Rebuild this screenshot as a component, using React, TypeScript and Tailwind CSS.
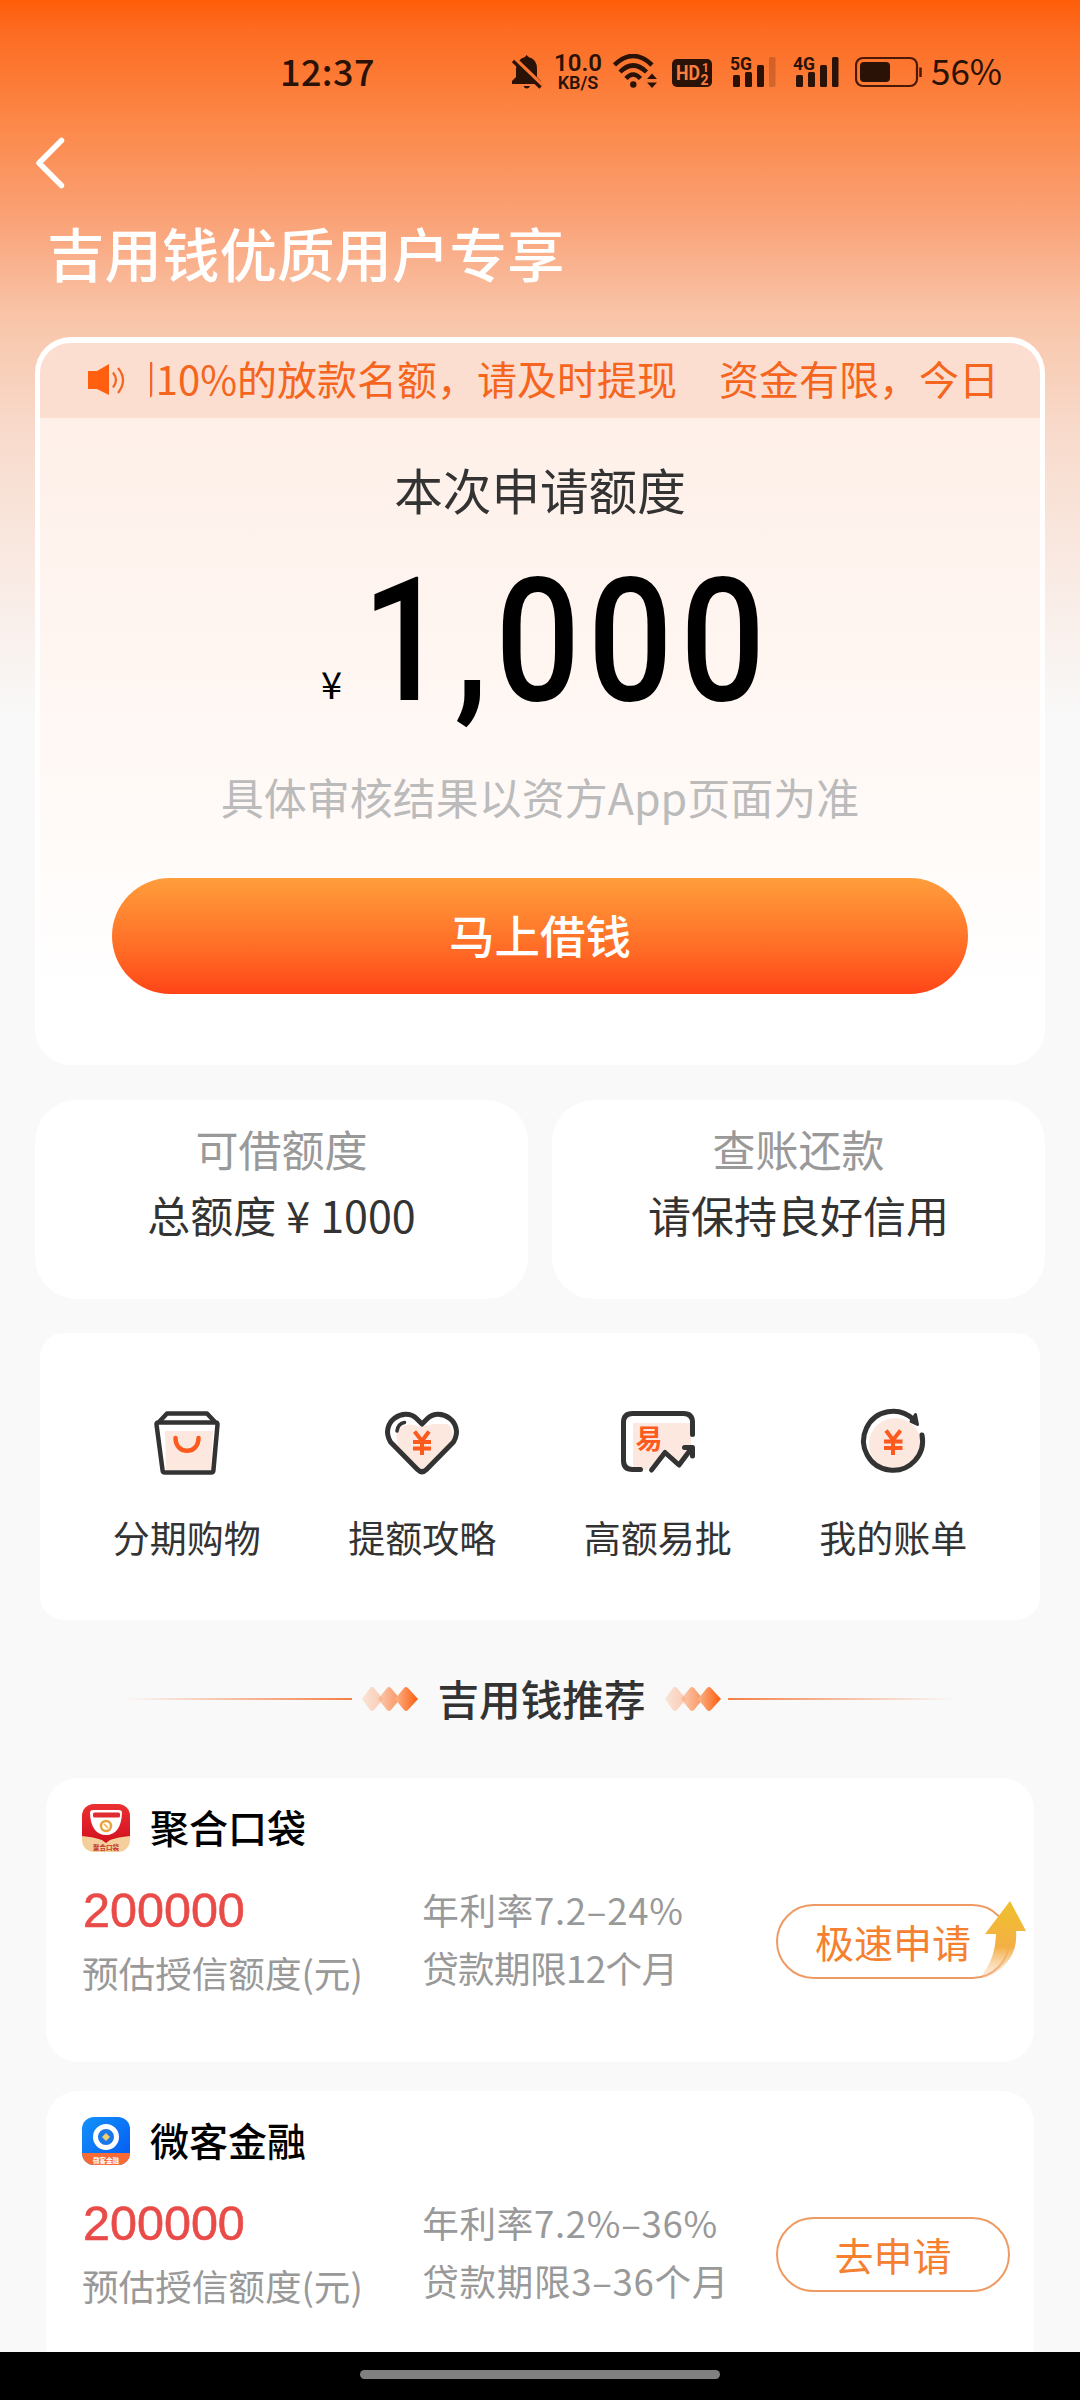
import type { ReactNode } from "react";

const features = [
  { label: "分期购物", icon: <BagIcon /> },
  { label: "提额攻略", icon: <HeartIcon /> },
  { label: "高额易批", icon: <ApproveIcon /> },
  { label: "我的账单", icon: <BillIcon /> },
];

const products = [
  { name: "聚合口袋", amount: "200000", rate: "年利率7.2–24%", term: "贷款期限12个月", termClass: "tracking-[-0.6px]", action: "极速申请", hot: true, logo: <PocketLogo /> },
  { name: "微客金融", amount: "200000", rate: "年利率7.2%–36%", term: "贷款期限3–36个月", termClass: "tracking-[0.7px]", action: "去申请", hot: false, logo: <WeikeLogo /> },
];

function BagIcon() {
  return (
    <svg width="80" height="80" viewBox="0 0 80 80" fill="none">
      <path d="M18 27H66L64 66H19Z" fill="#fde8df" />
      <path d="M9.500 20.500Q9.300 18.500 11.300 18.500H68.700Q70.700 18.500 70.500 20.500L66.400 66.500Q66.200 68.500 64.200 68.500H17.800Q15.800 68.500 15.600 66.500Z" stroke="#333" strokeWidth="4.500" strokeLinejoin="round" />
      <path d="M12 18L20 9.500H60L68 18" stroke="#333" strokeWidth="4.500" strokeLinejoin="round" />
      <path d="M28.500 34C28.500 51 51.500 51 51.500 34" stroke="#fc5a1e" strokeWidth="4.500" strokeLinecap="round" />
    </svg>
  );
}

function HeartIcon() {
  return (
    <svg width="80" height="80" viewBox="0 0 80 80" fill="none">
      <path d="M14 32C18 20 28 18 38 23L52 20H66Q75 30 67 40L40 67L16 42Z" fill="#fde8df" />
      <path d="M40 20L34.500 14.500C22 2.500 -3 18 8.500 38L35.500 65.500Q40 70 44.500 65.500L71.500 38C83 18 58 2.500 45.500 14.500Z" stroke="#333" strokeWidth="5" strokeLinejoin="round" />
      <path d="M15 27Q16 19.500 22.500 18.500" stroke="#333" strokeWidth="3.500" strokeLinecap="round" />
      <path d="M32.500 27.500L40 37L47 27.500M40 37V51M31 38H49M31 44.500H49" stroke="#fc5a1e" strokeWidth="4" />
    </svg>
  );
}

function ApproveIcon() {
  return (
    <svg width="80" height="80" viewBox="0 0 80 80" fill="none">
      <path d="M15 19H73V44L58 62L45 48L29 66H15Z" fill="#fde8df" />
      <path d="M22.500 65.500H14.500Q5.500 65.500 5.500 56.500V18.500Q5.500 9.500 14.500 9.500H65.500Q74.500 9.500 74.500 18.500V30.500" stroke="#333" strokeWidth="5" strokeLinecap="round" />
      <path d="M33.500 66L47 48.500L61 61L73 45" stroke="#333" strokeWidth="5" strokeLinecap="round" strokeLinejoin="round" />
      <path d="M66.500 43.500H74.500V52" stroke="#333" strokeWidth="5" strokeLinecap="round" strokeLinejoin="round" />
      <text x="17.500" y="45" fontSize="27" fontWeight="700" fill="#fc5a1e">易</text>
    </svg>
  );
}

function BillIcon() {
  return (
    <svg width="80" height="80" viewBox="0 0 80 80" fill="none">
      <circle cx="42" cy="40" r="26" fill="#fde8df" />
      <path d="M60.500 15.500A29.500 29.500 0 1 0 69 31" stroke="#333" strokeWidth="5" strokeLinecap="round" />
      <path d="M62.500 10.500L64.500 20.500L58 17.500Z" fill="#333" stroke="#333" strokeWidth="3" strokeLinecap="round" strokeLinejoin="round" />
      <path d="M33 26.500L40 36L47.500 26.500M40 36V51M31 37.500H49.500M31 44H49.500" stroke="#fc5a1e" strokeWidth="4" />
    </svg>
  );
}

function PocketLogo() {
  return (
    <svg width="48" height="48" viewBox="0 0 48 48">
      <defs>
        <clipPath id="pocket"><rect width="48" height="48" rx="12" /></clipPath>
        <linearGradient id="pocketRed" x1="0" y1="0" x2="0" y2="1">
          <stop stopColor="#eb3033" />
          <stop offset="1" stopColor="#d21020" />
        </linearGradient>
      </defs>
      <g clipPath="url(#pocket)">
        <rect width="48" height="48" fill="#f4cf9c" />
        <path d="M0 0H48V32Q36 33 28 36L24 39L20 36Q12 33 0 32Z" fill="url(#pocketRed)" />
        <path d="M11 6H37Q40 6 40 9C39.500 23 34 31 24 31S8.500 23 8 9Q8 6 11 6Z" fill="#fff" />
        <rect x="11" y="8.500" width="27" height="5" rx="1.500" fill="#e02b30" />
        <circle cx="24" cy="22" r="5" fill="none" stroke="#e8a33d" strokeWidth="2.500" />
        <path d="M22 20L26 24" stroke="#f2c063" strokeWidth="2" />
        <text x="24" y="45.500" textAnchor="middle" fontSize="6.500" fontWeight="700" fill="#c5352b">聚合口袋</text>
      </g>
    </svg>
  );
}

function WeikeLogo() {
  return (
    <svg width="48" height="48" viewBox="0 0 48 48">
      <defs>
        <clipPath id="weike"><rect width="48" height="48" rx="12" /></clipPath>
        <linearGradient id="weikeBlue" x1="0" y1="0" x2="1" y2="1">
          <stop stopColor="#1292fb" />
          <stop offset="1" stopColor="#0558f0" />
        </linearGradient>
      </defs>
      <g clipPath="url(#weike)">
        <rect width="48" height="48" fill="url(#weikeBlue)" />
        <rect y="36" width="48" height="12" fill="#fa6a35" />
        <circle cx="24" cy="20" r="10.500" fill="#1b78e8" stroke="#fff" strokeWidth="5" />
        <path d="M24 16L28 20L24 24L20 20Z" fill="#f0cf6a" />
        <text x="24" y="45.500" textAnchor="middle" fontSize="6.500" fontWeight="700" fill="#fff">微客金融</text>
      </g>
    </svg>
  );
}

function Signal({ label, weak }: { label: string; weak?: boolean }) {
  return (
    <svg className="overflow-visible" width="48" height="36" viewBox="0 0 48 36" fill="#2a1206">
      <text x="0" y="16" fontSize="19" fontWeight="700" textLength="22" lengthAdjust="spacingAndGlyphs" fontFamily="Roboto">{label}</text>
      <rect x="3" y="21" width="7" height="12" rx="1.500" />
      <rect x="15" y="18" width="7" height="15" rx="1.500" />
      <rect x="27" y="11" width="7" height="22" rx="1.500" />
      <rect x="39" y="3" width="6.500" height="30" rx="1.500" opacity={weak ? 0.2 : 1} />
    </svg>
  );
}

function StatusBar() {
  return (
    <div className="flex h-[110px] items-start pt-[54px] text-[#2a1206]">
      <span className="-mt-[3px] ml-[280px] w-[231px] text-[36px] leading-[38px] font-medium tracking-[0.4px]">12:37</span>
      <svg className="w-[43px] shrink-0" height="36" viewBox="0 0 43 36">
        <path d="M1 30V27L5 23V15Q6 5 14 3L15.500 1L17.500 3Q26 5 26 15V23L30 27V30Z" fill="#2a1206" />
        <path d="M12.500 32H19Q18 34.500 15.800 34.500Q13.500 34.500 12.500 32Z" fill="#2a1206" />
        <path d="M4 5L32 32" stroke="#fc7632" strokeWidth="4" />
        <path d="M2 7L29.500 33.500" stroke="#2a1206" strokeWidth="3.200" />
      </svg>
      <div className="w-[48px] shrink-0 text-center font-[Roboto] font-semibold">
        <p className="-mt-[1px] text-[24px] leading-[21px]">10.0</p>
        <p className="text-[18px] leading-[18px]">KB/S</p>
      </div>
      <svg className="ml-[11px] shrink-0" width="46" height="36" viewBox="0 0 46 36" fill="none">
        <path d="M1.500 11Q20 -7 39 11" stroke="#2a1206" strokeWidth="4.500" />
        <path d="M7 18Q20 5 33.500 18" stroke="#2a1206" strokeWidth="4.500" />
        <path d="M13 24.500Q20 16.500 27.500 24.500" stroke="#2a1206" strokeWidth="4.500" />
        <circle cx="20.300" cy="30.500" r="3.200" fill="#2a1206" />
        <path d="M34 25L39 19.500L44 25ZM34 28.500L39 34L44 28.500Z" fill="#2a1206" />
      </svg>
      <svg className="ml-[13px] shrink-0" width="41" height="36" viewBox="0 0 41 36">
        <rect y="5" width="40" height="28" rx="5" fill="#2a1206" />
        <g fill="#fb8040" fontFamily="Roboto" fontWeight="700">
          <text x="4" y="26" fontSize="21" textLength="24" lengthAdjust="spacingAndGlyphs">HD</text>
          <text x="30" y="17.500" fontSize="12">1</text>
          <text x="28.500" y="30.500" fontSize="14">2</text>
        </g>
      </svg>
      <div className="ml-[17px] flex shrink-0 gap-[15px]">
        <Signal label="5G" weak />
        <Signal label="4G" />
      </div>
      <svg className="ml-[14px] shrink-0" width="68" height="36" viewBox="0 0 68 36" fill="none">
        <rect x="1" y="4" width="61" height="28" rx="7" stroke="#4a1a06" strokeWidth="2.200" />
        <rect x="5" y="8" width="30" height="20" rx="4" fill="#2a1206" />
        <path d="M65.500 13.500V23" stroke="#4a1a06" strokeWidth="2.500" />
      </svg>
      <span className="-mt-[3px] ml-[8px] text-[35px] leading-[38px]">56%</span>
    </div>
  );
}

function NoticeBar() {
  return (
    <div className="flex h-[75px] items-center bg-[#fcded1] pb-[3px] pl-[48px] text-[#f5651d]">
      <svg className="shrink-0" width="38" height="34" viewBox="0 0 38 34" fill="none">
        <path d="M0 9H9L21 2V33L9 27H0Z" fill="#ff5f0f" />
        <path d="M25 10.500Q31 18 25 25.500M30 6Q40 18 30 31" stroke="#f5651d" strokeWidth="2.200" />
      </svg>
      <div className="ml-[24px] flex w-[849px] justify-end overflow-hidden pb-[2px] text-[40px] leading-[58px] whitespace-pre">
        <span>到10%的放款名额，请及时提现</span>
        <span className="ml-[42px]">资金有限，今日</span>
      </div>
    </div>
  );
}

function QuotaCard() {
  return (
    <section className="mx-[35px] flex h-[728px] flex-col overflow-hidden rounded-[36px] border-x-[5px] border-t-[6px] border-white bg-linear-to-b from-[#feeee6] via-[#fff7f3] to-white to-90%">
      <NoticeBar />
      <div className="flex flex-col items-center">
        <h2 className="mt-[36px] text-[48.6px] leading-[70px] text-[#333]">本次申请额度</h2>
        <div className="mt-[34px] flex h-[172px] w-full justify-start text-black">
          <span className="mt-[97px] ml-[281px] w-[41px] text-[38px] leading-[56px]">¥</span>
          <span className="origin-left scale-x-[0.87] font-[Roboto] text-[172px] leading-[166px] font-medium tracking-[8.500px]">1,000</span>
        </div>
        <p className="mt-[35px] text-[43px] leading-[62px] text-[#bbb]">具体审核结果以资方App页面为准</p>
        <button className="mt-[51px] h-[116px] w-[856px] rounded-full bg-linear-to-b from-[#ff9d3b] to-[#ff4317] pb-[3px] text-[45.5px] leading-[66px] font-medium text-white">
          马上借钱
        </button>
      </div>
    </section>
  );
}

function InfoCard({ title, children }: { title: string; children: ReactNode }) {
  return (
    <div className="h-[199px] flex-1 rounded-[42px] bg-white pt-[15px] text-center text-[43px]">
      <p className="leading-[66px] text-[#999]">{title}</p>
      <p className="leading-[66px] text-[#333]">{children}</p>
    </div>
  );
}

function Diamonds() {
  return (
    <svg className="shrink-0" width="56" height="24" viewBox="0 0 56 24">
      <defs>
        <linearGradient id="dia" x1="0" y1="0" x2="1" y2="0">
          <stop stopColor="#fcb48c" />
          <stop offset="1" stopColor="#fb5c0c" />
        </linearGradient>
      </defs>
      <path d="M0 12L8 1Q10 -1 12 1L21 12L12 23Q10 25 8 23Z" fill="url(#dia)" opacity="0.3" />
      <path d="M16 12L25 1Q27 -1 29 1L38 12L29 23Q27 25 25 23Z" fill="url(#dia)" opacity="0.65" />
      <path d="M33 12L42 1Q44 -1 46 1L56 12L46 23Q44 25 42 23Z" fill="url(#dia)" />
    </svg>
  );
}

function SectionTitle() {
  return (
    <div className="mt-[48px] flex h-[62px] items-center pl-[125px]">
      <div className="h-[2px] w-[227px] bg-linear-to-r from-transparent to-[#f57f45]" />
      <div className="ml-[10px]"><Diamonds /></div>
      <h3 className="w-[247px] pb-[3px] text-center text-[41.6px] leading-[58px] font-medium text-[#333]">吉用钱推荐</h3>
      <Diamonds />
      <div className="ml-[7px] h-[2px] w-[227px] bg-linear-to-l from-transparent to-[#f57f45]" />
    </div>
  );
}

function ProductCard({ product }: { product: (typeof products)[number] }) {
  return (
    <article className="h-[284px] shrink-0 rounded-[32px] bg-white px-[36px] pt-[23px]">
      <div className="flex h-[54px] items-center">
        {product.logo}
        <h4 className="ml-[20px] pb-[5px] text-[39px] leading-[54px] font-medium text-black">{product.name}</h4>
      </div>
      <div className="mt-[23px] flex text-[36.6px] text-[#999]">
        <div className="w-[346px]">
          <p className="ml-px font-['Liberation_Sans'] text-[48.5px] leading-[65px] text-[#e94b48] [-webkit-text-stroke:0.6px_#e94b48]">{product.amount}</p>
          <p className="leading-[60px]">预估授信额度(元)</p>
        </div>
        <div className="w-[360px] pt-[3px]">
          <p className="leading-[58px] tracking-[0.7px] whitespace-nowrap">{product.rate}</p>
          <p className={`leading-[58px] whitespace-nowrap ${product.termClass}`}>{product.term}</p>
        </div>
        <div className="relative mt-[26px] -mr-[12px] h-[75px] w-[234px] shrink-0">
          <button className="h-full w-full rounded-full border-2 border-[#ee9a63] pb-[1px] text-[39px] leading-[56px] text-[#f5802f]">
            {product.action}
          </button>
          {product.hot && (
            <svg className="absolute -top-[4px] right-[-17px]" width="44" height="80" viewBox="0 0 44 80">
              <defs>
                <linearGradient id="arrow" x1="0" y1="0" x2="0" y2="1">
                  <stop stopColor="#efc02c" />
                  <stop offset="0.600" stopColor="#f3b045" />
                  <stop offset="1" stopColor="#fbd0b0" stopOpacity="0.300" />
                </linearGradient>
              </defs>
              <path d="M27 1L43 31H33Q36 62 3 78Q-1 78 -1 74Q12 60 13 34H2Z" fill="url(#arrow)" />
            </svg>
          )}
        </div>
      </div>
    </article>
  );
}

const App = () => {
  return (
    <div className="flex h-[2400px] w-[1080px] flex-col overflow-hidden bg-[#f9f9f9] bg-[linear-gradient(180deg,#ff5d08_0px,#fd6b21_30px,#fc8747_120px,#faa277_220px,#f9bfa1_300px,#f8cab0_340px,#f8dacb_430px,#f9e8e0_550px,#f9f9f9_720px)] font-[Noto_Sans_CJK_SC,sans-serif]">
      <StatusBar />
      <svg className="mt-[25px] ml-[32px]" width="36" height="56" viewBox="0 0 36 56" fill="none">
        <path d="M29.500 5.500L7 28L29.500 50.500" stroke="#fff" strokeWidth="5.500" strokeLinecap="round" strokeLinejoin="round" />
      </svg>
      <h1 className="mt-[21px] mb-[45px] ml-[47px] text-[57.500px] leading-[80px] font-medium text-white">吉用钱优质用户专享</h1>
      <QuotaCard />
      <div className="mx-[35px] mt-[35px] flex gap-[24px]">
        <InfoCard title="可借额度">总额度<span className="mx-[10px]">¥</span>1000</InfoCard>
        <InfoCard title="查账还款">请保持良好信用</InfoCard>
      </div>
      <nav className="mx-[40px] mt-[34px] flex h-[288px] justify-center rounded-[24px] bg-white pt-[71px]">
        {features.map((f) => (
          <a key={f.label} className="flex w-[235.500px] flex-col items-center text-[37px] text-[#333]">
            {f.icon}
            <span className="mt-[26px] leading-[54px]">{f.label}</span>
          </a>
        ))}
      </nav>
      <SectionTitle />
      <div className="mx-[46px] mt-[48px] flex h-[574px] flex-col gap-[29px] overflow-hidden">
        {products.map((p) => (
          <ProductCard key={p.name} product={p} />
        ))}
      </div>
      <div className="flex h-[48px] shrink-0 justify-center bg-black pt-[18px]">
        <div className="h-[9px] w-[360px] rounded-full bg-[#808080]" />
      </div>
    </div>
  );
};

export default App;
